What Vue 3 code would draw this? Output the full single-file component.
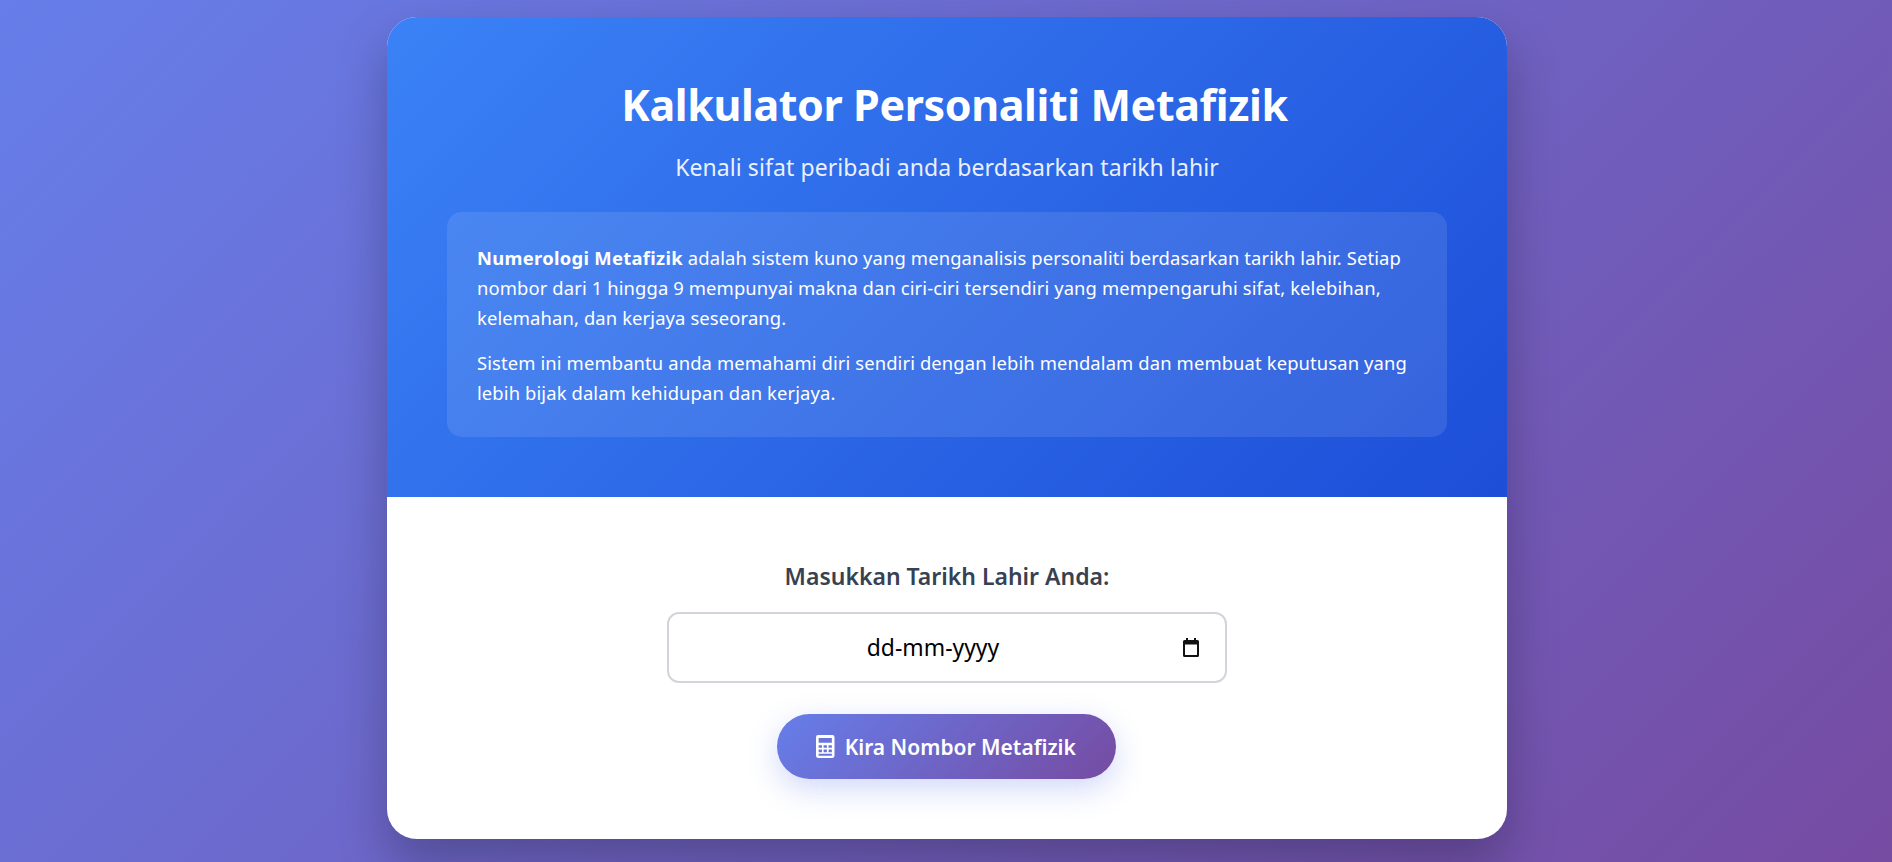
<template>
  <main class="page">
    <section class="card">
      <header class="hero">
        <h1>Kalkulator Personaliti Metafizik</h1>
        <p class="tagline">Kenali sifat peribadi anda berdasarkan tarikh lahir</p>
        <div class="info">
          <p><strong>Numerologi Metafizik</strong> adalah sistem kuno yang menganalisis personaliti berdasarkan tarikh lahir. Setiap nombor dari 1 hingga 9 mempunyai makna dan ciri-ciri tersendiri yang mempengaruhi sifat, kelebihan, kelemahan, dan kerjaya seseorang.</p>
          <p>Sistem ini membantu anda memahami diri sendiri dengan lebih mendalam dan membuat keputusan yang lebih bijak dalam kehidupan dan kerjaya.</p>
        </div>
      </header>
      <div class="form">
        <label class="label">Masukkan Tarikh Lahir Anda:</label>
        <div class="date">
          <span class="date-text">dd-mm-yyyy</span>
          <svg class="cal" viewBox="0 0 16 19" width="16" height="19" aria-hidden="true">
            <path fill="#111" fill-rule="evenodd" d="M3 0h2v2h6V0h2v2h1.5A1.5 1.5 0 0 1 16 3.5v14a1.5 1.5 0 0 1-1.5 1.5h-13A1.5 1.5 0 0 1 0 17.500v-14A1.500 1.500 0 0 1 1.500 2H3zM2 6.500V17h12V6.500z"/>
          </svg>
        </div>
        <button class="btn" type="button">
          <svg class="calc" viewBox="0 0 448 512" width="18.500" height="23" preserveAspectRatio="none" aria-hidden="true">
            <path fill="#fff" fill-rule="evenodd" d="M48 0h352a48 48 0 0 1 48 48v416a48 48 0 0 1-48 48H48a48 48 0 0 1-48-48V48A48 48 0 0 1 48 0zM64 64v110h320V64zM64 226v58h80v-58zM184 226v58h80v-58zM304 226v58h80v-58zM64 324v58h80v-58zM184 324v58h80v-58zM304 324v58h80v-58zM64 420v40h320v-40z"/>
          </svg>
          <span>Kira Nombor Metafizik</span>
        </button>
      </div>
    </section>
  </main>
</template>

<script setup>
</script>

<style>
html, body { margin: 0; }
</style>

<style scoped>
.page {
  min-height: 862px;
  box-sizing: border-box;
  padding: 17px 0 0 2px;
  background: linear-gradient(135deg, #667eea 0%, #764ba2 100%);
  font-family: "Noto Sans", "Open Sans", sans-serif;
  overflow: hidden;
}
.card {
  width: 1120px;
  height: 822px;
  margin: 0 auto;
  border-radius: 30px;
  overflow: hidden;
  background: #fff;
  box-shadow: 0 25px 50px rgba(0, 0, 0, 0.25);
}
.hero {
  box-sizing: border-box;
  height: 480px;
  padding: 58px 60px 60px;
  text-align: center;
  color: #fff;
  background: linear-gradient(135deg, #3b82f6 0%, #1d4ed8 100%);
}
h1 { margin: 0 0 17px; padding-left: 15px; font-size: 43px; line-height: 60px; font-weight: 700; letter-spacing: -0.4px; }
.tagline { margin: 0 0 30px; font-size: 23px; line-height: 30px; opacity: 0.9; letter-spacing: 0.08px; }
.info {
  box-sizing: border-box;
  height: 225px;
  padding: 31px 30px 29px;
  text-align: left;
  border-radius: 15px;
  background: rgba(255, 255, 255, 0.1);
  font-size: 18.4px;
  line-height: 30px;
  letter-spacing: 0.12px;
}
.info strong { letter-spacing: 0.3px; }
.info p { margin: 0 0 15px; }
.info p:last-child { margin: 0; }
.form {
  box-sizing: border-box;
  height: 342px;
  padding: 60px;
  display: flex;
  flex-direction: column;
  align-items: center;
}
.label { color: #374151; font-size: 23px; line-height: 38px; font-weight: 600; margin-bottom: 17px; }
.date {
  box-sizing: border-box;
  width: 560px;
  height: 71px;
  border: 2px solid #d1d5db;
  border-radius: 12px;
  padding: 0 26px 0 14px;
  display: flex;
  align-items: center;
  font-size: 22.9px;
  color: #000;
}
.date-text { flex: 1; text-align: center; }
.btn {
  box-sizing: border-box;
  margin: 31px 2px 0 0;
  width: 339px;
  height: 65px;
  border: 0;
  border-radius: 50px;
  display: flex;
  align-items: center;
  justify-content: center;
  gap: 10px;
  color: #fff;
  font: 600 21px "Noto Sans", sans-serif;
  background: linear-gradient(135deg, #667eea 0%, #764ba2 100%);
  box-shadow: 0 10px 30px rgba(102, 126, 234, 0.3);
}
</style>
